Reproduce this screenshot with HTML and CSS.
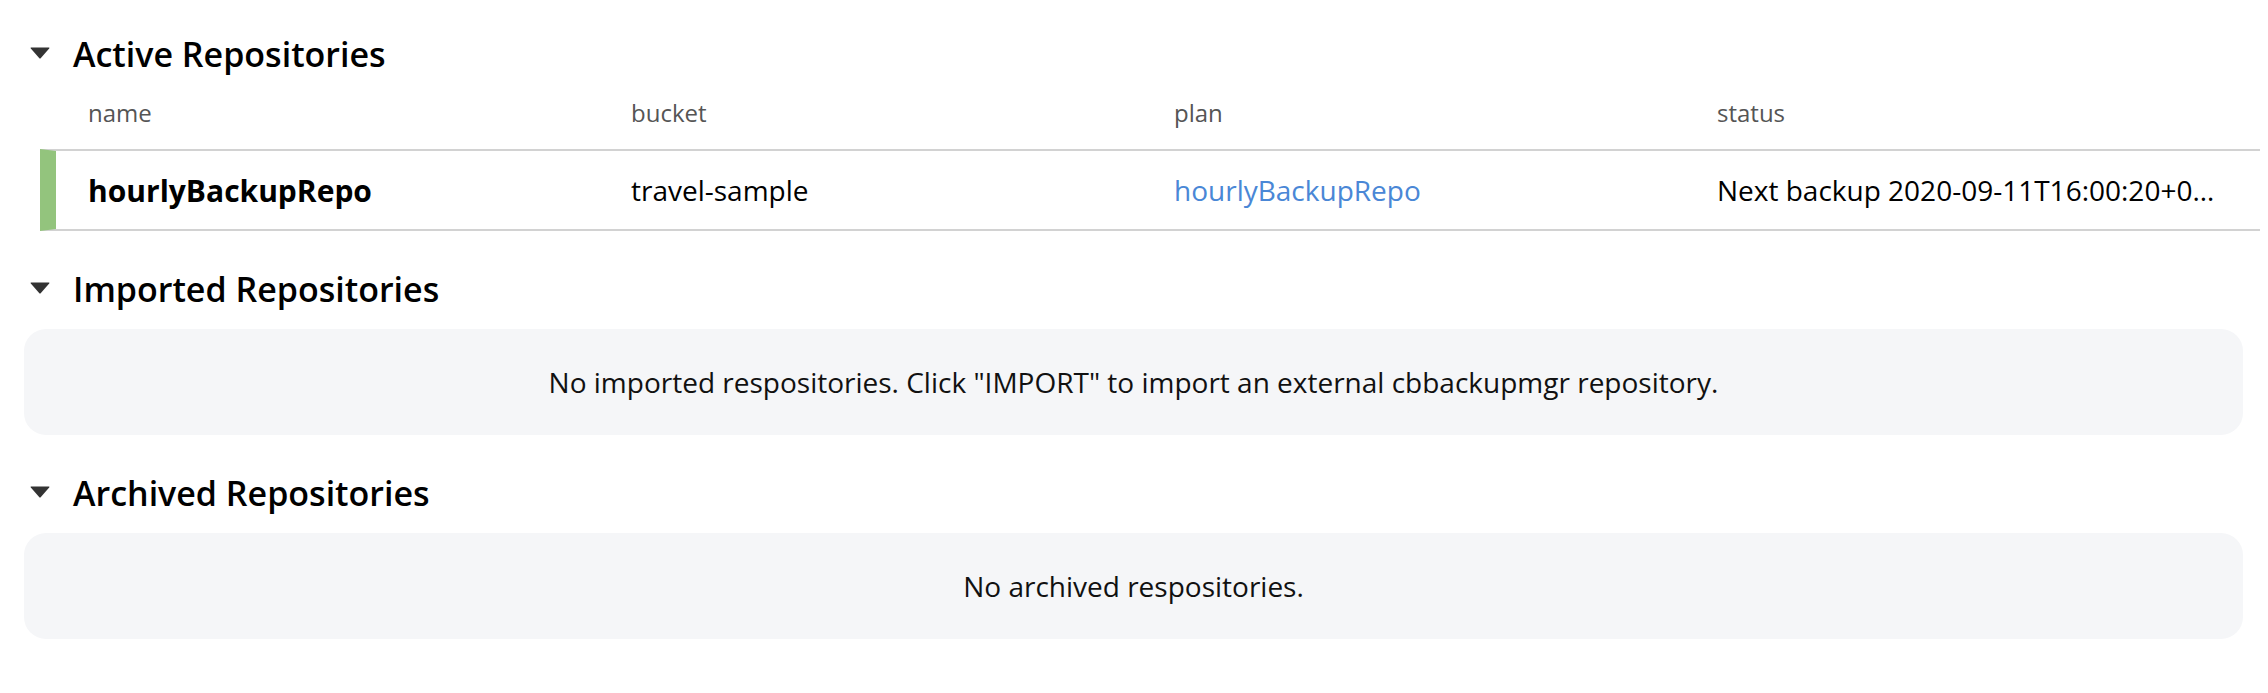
FILE: index.html
```html
<!DOCTYPE html>
<html lang="en">
<head>
<meta charset="utf-8">
<title>Repositories</title>
<link rel="stylesheet" href="styles.css">
</head>
<body>
<div class="page">
  <section class="section">
    <h2 class="section-title">
      <svg class="caret" viewBox="0 0 20 12" width="20" height="12"><path d="M1.2 0.5 H18.8 Q20 0.5 19.2 1.5 L10.9 11 Q10 12 9.1 11 L0.8 1.5 Q0 0.5 1.2 0.5 Z"/></svg>
      <span>Active Repositories</span>
    </h2>
    <div class="repo-table">
      <div class="repo-head">
        <div class="cell">name</div>
        <div class="cell">bucket</div>
        <div class="cell">plan</div>
        <div class="cell">status</div>
      </div>
      <div class="repo-row">
        <div class="cell cell-name">hourlyBackupRepo</div>
        <div class="cell">travel-sample</div>
        <div class="cell"><a class="plan-link" href="#">hourlyBackupRepo</a></div>
        <div class="cell cell-status">Next backup 2020-09-11T16:00:20+01:00</div>
      </div>
    </div>
  </section>
  <section class="section">
    <h2 class="section-title">
      <svg class="caret" viewBox="0 0 20 12" width="20" height="12"><path d="M1.2 0.5 H18.8 Q20 0.5 19.2 1.5 L10.9 11 Q10 12 9.1 11 L0.8 1.5 Q0 0.5 1.2 0.5 Z"/></svg>
      <span>Imported Repositories</span>
    </h2>
    <div class="empty-box">No imported respositories. Click "IMPORT" to import an external cbbackupmgr repository.</div>
  </section>
  <section class="section">
    <h2 class="section-title">
      <svg class="caret" viewBox="0 0 20 12" width="20" height="12"><path d="M1.2 0.5 H18.8 Q20 0.5 19.2 1.5 L10.9 11 Q10 12 9.1 11 L0.8 1.5 Q0 0.5 1.2 0.5 Z"/></svg>
      <span>Archived Repositories</span>
    </h2>
    <div class="empty-box">No archived respositories.</div>
  </section>
</div>
</body>
</html>
```
FILE: styles.css
```css
* { box-sizing: border-box; }
html, body { margin: 0; padding: 0; background: #fff; }
body {
  font-family: "Open Sans", "Noto Sans", sans-serif;
  color: #000;
  overflow: hidden;
}
.page {
  padding: 32px 25px 0 24px;
}
.section + .section { margin-top: 36px; }
.section-title {
  margin: 0;
  height: 44px;
  display: flex;
  align-items: center;
  gap: 23px;
  padding-left: 6px;
  font-size: 34px;
  font-weight: 600;
  line-height: 44px;
  color: #000;
}
.caret { fill: #333; flex: none; margin-top: -2px; }
.repo-table {
  margin-left: 16px;
  margin-right: -17px;
}
.repo-head, .repo-row {
  display: grid;
  grid-template-columns: repeat(4, 543px);
  align-items: center;
  padding-left: 32px;
}
.repo-head {
  height: 73px;
  margin-left: 16px;
  font-size: 24px;
  color: #555;
}
.repo-row {
  height: 82px;
  border-top: 2px solid #d2d2d2;
  border-bottom: 2px solid #d2d2d2;
  border-left: 16px solid #93c47d;
  font-size: 28px;
  color: #000;
}
.cell {
  white-space: nowrap;
  overflow: hidden;
  text-overflow: ellipsis;
  padding-right: 40px;
}
.cell-name { font-weight: 700; font-size: 30px; }
.plan-link { color: #4a87d6; text-decoration: none; }
.empty-box {
  margin-top: 18px;
  height: 106px;
  border-radius: 22px;
  background: #f5f6f8;
  display: flex;
  align-items: center;
  justify-content: center;
  font-size: 28px;
  color: #111;
}
```
